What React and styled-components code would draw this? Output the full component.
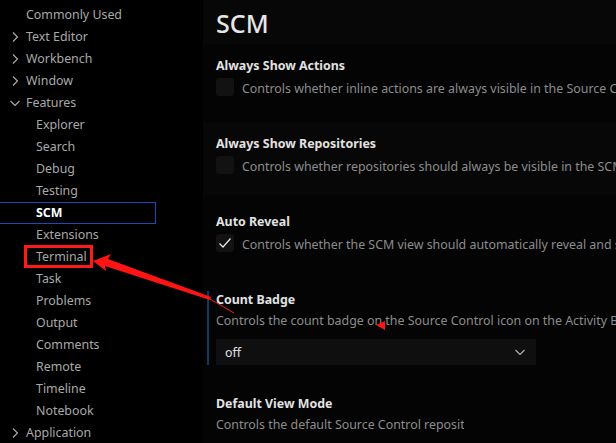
import styled, { createGlobalStyle } from "styled-components";

const GlobalStyle = createGlobalStyle`
    html, body {
        margin: 0;
        padding: 0;
        background: #000;
        overflow: hidden;
    }
    body {
        font-family: "Noto Sans", "Open Sans", sans-serif;
        font-size: 12.4px;
    }
`;

const Page = styled.div`
    position: relative;
    display: flex;
    width: 616px;
    height: 443px;
    overflow: hidden;
    background: #000;
`;

const Sidebar = styled.div`
    width: 203px;
    flex-shrink: 0;
    padding-top: 4px;
    display: flex;
    flex-direction: column;
`;

const TreeRow = styled.div`
    display: flex;
    align-items: center;
    flex-shrink: 0;
    height: 22px;
    box-sizing: border-box;
    width: 158px;
    margin-left: -2px;
    padding-left: ${props => 8 + props.$depth * 10}px;
    color: ${props => (props.$selected ? "#ffffff" : "#a8a8a8")};
    font-weight: ${props => (props.$selected ? 700 : 400)};
    border: 1px solid ${props => (props.$selected ? "#1450b4" : "transparent")};
    white-space: nowrap;

    .twistie {
        width: 16px;
        height: 16px;
        margin-right: 3px;
        flex-shrink: 0;
    }
`;

const Label = styled.span`
    position: relative;
    line-height: 18px;

    &::after {
        content: "";
        display: ${props => (props.$marked ? "block" : "none")};
        position: absolute;
        left: -12px;
        right: -6px;
        top: -3px;
        bottom: -2px;
        border: 3px solid #ff1a1a;
    }
`;

const Main = styled.div`
    flex: 1;
    min-width: 0;
    background: #040404;
    display: flex;
    flex-direction: column;
`;

const Header = styled.div`
    flex-shrink: 0;
    height: 44px;
    box-sizing: border-box;
    background: #070707;
    padding: 6px 13px 0;
    font-size: 25px;
    font-weight: 500;
    color: #e6e6e6;
    line-height: 34px;
`;

const Setting = styled.div`
    flex-shrink: 0;
    padding: 13px 0 ${props => props.$bottom || 21}px 13px;
    margin-bottom: 5px;
    background: ${props => (props.$hover ? "#070707" : "transparent")};
    white-space: nowrap;
    overflow: hidden;
`;

const Focus = styled.div`
    margin-left: -9px;
    padding-left: 7px;
    border-left: 2px solid ${props => (props.$active ? "#0f3a62" : "transparent")};
`;

const Title = styled.div`
    font-weight: 700;
    color: #e2e2e2;
    line-height: 18px;
`;

const Row = styled.div`
    display: flex;
    align-items: center;
    gap: 8px;
    margin-top: 3px;
    height: 18px;
`;

const Description = styled.div`
    color: #8c8c8c;
    line-height: 18px;
    margin-top: 3px;
    max-width: ${props => props.$max || "none"};
    overflow: hidden;
`;

const Checkbox = styled.div`
    width: 18px;
    height: 18px;
    border-radius: 3px;
    background: #121212;
    flex-shrink: 0;
    display: flex;
    align-items: center;
    justify-content: center;
    color: #e8e8e8;
`;

const Select = styled.div`
    margin-top: 9px;
    width: ${props => props.$width || 320}px;
    height: 26px;
    box-sizing: border-box;
    background: #0f0f0f;
    display: flex;
    align-items: center;
    justify-content: space-between;
    padding: 0 8px 0 9px;
    color: #e0e0e0;
`;

const Overlay = styled.svg`
    position: absolute;
    left: 0;
    top: 0;
    pointer-events: none;
`;

function Chevron({ open }) {
    return (
        <svg className="twistie" viewBox="0 0 16 16" fill="none" stroke="#b0b0b0" strokeWidth="1.1">
            {open ? <path d="M3.5 6l4.5 4.5L12.5 6" /> : <path d="M6 3.5l4.5 4.5L6 12.5" />}
        </svg>
    );
}

const tree = [
    { label: "Commonly Used", depth: 0 },
    { label: "Text Editor", depth: 0, twistie: "closed" },
    { label: "Workbench", depth: 0, twistie: "closed" },
    { label: "Window", depth: 0, twistie: "closed" },
    { label: "Features", depth: 0, twistie: "open" },
    { label: "Explorer", depth: 1 },
    { label: "Search", depth: 1 },
    { label: "Debug", depth: 1 },
    { label: "Testing", depth: 1 },
    { label: "SCM", depth: 1, selected: true },
    { label: "Extensions", depth: 1 },
    { label: "Terminal", depth: 1, marked: true },
    { label: "Task", depth: 1 },
    { label: "Problems", depth: 1 },
    { label: "Output", depth: 1 },
    { label: "Comments", depth: 1 },
    { label: "Remote", depth: 1 },
    { label: "Timeline", depth: 1 },
    { label: "Notebook", depth: 1 },
    { label: "Application", depth: 0, twistie: "closed" },
];

function Check() {
    return (
        <svg width="16" height="16" viewBox="0 0 16 16" fill="none" stroke="currentColor" strokeWidth="1.2">
            <path d="M2.5 8.5l3.5 3.5 7.5-8.5" />
        </svg>
    );
}

export default function App() {
    return (
        <Page>
            <GlobalStyle />
            <Sidebar>
                {tree.map(item => (
                    <TreeRow key={item.label} $depth={item.depth} $selected={item.selected}>
                        {item.twistie ? <Chevron open={item.twistie === "open"} /> : <span className="twistie" />}
                        <Label $marked={item.marked}>{item.label}</Label>
                    </TreeRow>
                ))}
            </Sidebar>
            <Main>
                <Header>SCM</Header>
                <Setting>
                    <Title>Always Show Actions</Title>
                    <Row>
                        <Checkbox />
                        <Description as="span">Controls whether inline actions are always visible in the Source Control view.</Description>
                    </Row>
                </Setting>
                <Setting $hover>
                    <Title>Always Show Repositories</Title>
                    <Row>
                        <Checkbox />
                        <Description as="span">Controls whether repositories should always be visible in the SCM view.</Description>
                    </Row>
                </Setting>
                <Setting>
                    <Title>Auto Reveal</Title>
                    <Row>
                        <Checkbox><Check /></Checkbox>
                        <Description as="span">Controls whether the SCM view should automatically reveal and select files when opening them.</Description>
                    </Row>
                </Setting>
                <Setting $bottom={12}>
                    <Focus $active>
                        <Title>Count Badge</Title>
                        <Description>Controls the count badge on the Source Control icon on the Activity Bar.</Description>
                        <Select>
                            <span>off</span>
                            <svg width="16" height="16" viewBox="0 0 16 16" fill="none" stroke="#a9b4c0" strokeWidth="1.1">
                                <path d="M3.5 6l4.5 4.5L12.5 6" />
                            </svg>
                        </Select>
                    </Focus>
                </Setting>
                <Setting>
                    <Title>Default View Mode</Title>
                    <Description $max="248px">Controls the default Source Control repository view mode.</Description>
                    <Select $width={248} />
                </Setting>
            </Main>
            <Overlay width="616" height="443" viewBox="0 0 616 443">
                <polygon
                    fill="#ff1414"
                    points="93,261 111,254 108,259 211,297 210,300 105,266 106,271"
                />
                <line x1="210" y1="299" x2="234" y2="313" stroke="#ff1414" strokeWidth="1" />
                <polygon fill="#ff1414" points="376,325 385,321 385,330" />
            </Overlay>
        </Page>
    );
}
